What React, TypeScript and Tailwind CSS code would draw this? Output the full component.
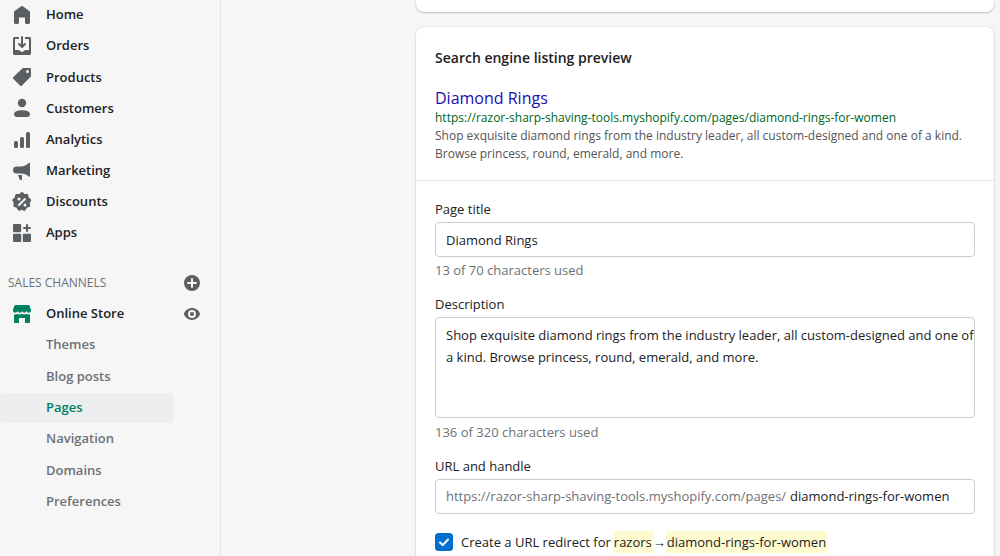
import React, { useState } from "react";
import clsx from "clsx";

type IconProps = { className?: string };

const Svg = ({
  children,
  className = "size-5",
}: IconProps & { children: React.ReactNode }) => (
  <svg
    viewBox="0 0 20 20"
    fill="currentColor"
    aria-hidden="true"
    className={clsx("shrink-0", className)}
  >
    {children}
  </svg>
);

const HomeIcon = () => (
  <Svg>
    <path d="M18 7.3V17.6c0 .8-.6 1.4-1.4 1.4h-2.2c-.8 0-1.4-.6-1.4-1.4V12.500H7v5.100c0 .8-.6 1.400-1.400 1.400H3.400C2.600 19 2 18.400 2 17.600V7.300c0-.5.2-.9.6-1.200l6.600-4.800c.5-.35 1.100-.35 1.600 0l6.600 4.800c.4.3.6.7.6 1.200z" />
  </Svg>
);

const OrdersIcon = () => (
  <Svg>
    <path d="M11 1a1 1 0 1 0-2 0v7.586L7.707 7.293a1 1 0 0 0-1.414 1.414l3 3a1 1 0 0 0 1.414 0l3-3a1 1 0 0 0-1.414-1.414L11 8.586V1z" />
    <path d="M3 14V3h4V1H2.500A1.500 1.500 0 0 0 1 2.500v15A1.500 1.500 0 0 0 2.500 19h15a1.500 1.500 0 0 0 1.500-1.500v-15A1.500 1.500 0 0 0 17.500 1H13v2h4v11h-3.500c-.775 0-1.388.662-1.926 1.244l-.11.12A1.994 1.994 0 0 1 10 16a1.994 1.994 0 0 1-1.463-.637l-.111-.12C7.888 14.664 7.275 14 6.500 14H3z" />
  </Svg>
);

const ProductsIcon = () => (
  <Svg>
    <path
      fillRule="evenodd"
      d="M10.300 1.400A1.400 1.400 0 0 1 11.300 1H17.600A1.400 1.400 0 0 1 19 2.400V8.700a1.400 1.400 0 0 1-.4 1l-8.600 8.900a1.400 1.400 0 0 1-2 0L1.400 12a1.400 1.400 0 0 1 0-2zM15.500 6a1.500 1.500 0 1 0 0-3 1.500 1.500 0 0 0 0 3z"
    />
  </Svg>
);

const CustomersIcon = () => (
  <Svg>
    <circle cx="10" cy="5" r="4.200" />
    <path d="M2 16c0-2.400 3.600-3.800 8-3.800s8 1.400 8 3.800c0 2-1.200 3-3 3H5c-1.800 0-3-1-3-3z" />
  </Svg>
);

const AnalyticsIcon = () => (
  <Svg>
    <rect x="2" y="11" width="4" height="7" rx="1.500" />
    <rect x="8" y="7" width="4" height="11" rx="1.500" />
    <rect x="14" y="2" width="4" height="16" rx="1.500" />
  </Svg>
);

const MarketingIcon = () => (
  <Svg>
    <path d="M18 2.200v13.100c0 .5-.5.700-.9.400-2.500-2.100-5.100-3.200-8.100-3.200H4.500A3.500 3.500 0 0 1 1 9a3.500 3.500 0 0 1 3.500-3.500H9c3 0 5.600-1.300 8.100-3.700.4-.3.9-.1.9.4z" />
    <path d="M6 14h4v4.200c0 .5-.4.800-.9.800H8.500c-.4 0-.7-.2-.8-.6z" />
  </Svg>
);

const DiscountsIcon = () => (
  <Svg>
    <path
      fillRule="evenodd"
      d="M11.600.9a2.200 2.200 0 0 0-3.200 0l-.8.800a1.200 1.200 0 0 1-1 .3l-1.100-.1a2.200 2.200 0 0 0-2.500 2.000l-.1 1.100a1.200 1.200 0 0 1-.6.900l-.900.600a2.200 2.200 0 0 0-.5 3.100l.6.900c.2.300.3.700.2 1l-.3 1.100a2.200 2.200 0 0 0 1.600 2.700l1.100.3c.3.100.6.300.8.700l.4 1a2.200 2.200 0 0 0 2.900 1.100l1-.5c.4-.2.700-.2 1.100 0l1 .5a2.200 2.200 0 0 0 2.900-1.100l.4-1c.2-.4.5-.6.8-.7l1.100-.3a2.200 2.200 0 0 0 1.600-2.700l-.3-1.100c-.1-.3 0-.7.2-1l.6-.9a2.200 2.200 0 0 0-.5-3.100l-.9-.6a1.200 1.200 0 0 1-.6-.9l-.1-1.100a2.200 2.200 0 0 0-2.500-2l-1.100.1a1.200 1.200 0 0 1-1-.3zM7 8.500a1.500 1.500 0 1 0 0-3 1.500 1.500 0 0 0 0 3zm6 6a1.500 1.500 0 1 0 0-3 1.500 1.500 0 0 0 0 3zm.7-6.800a1 1 0 0 0-1.400-1.400l-6 6a1 1 0 1 0 1.400 1.400z"
    />
  </Svg>
);

const AppsIcon = () => (
  <Svg>
    <rect x="1" y="1" width="8.200" height="8.200" rx="1" />
    <rect x="1" y="10.800" width="8.200" height="8.200" rx="1" />
    <rect x="10.800" y="10.800" width="8.200" height="8.200" rx="1" />
    <path d="M14 2a1 1 0 1 1 2 0v2h2a1 1 0 1 1 0 2h-2v2a1 1 0 1 1-2 0V6h-2a1 1 0 1 1 0-2h2z" />
  </Svg>
);

const StoreIcon = () => (
  <Svg>
    <path d="M3.500 1h13a1 1 0 0 1 .9.6L19 5.500V7a2.300 2.300 0 0 1-4.500 0 2.300 2.300 0 0 1-4.500 0 2.300 2.300 0 0 1-4.500 0A2.300 2.300 0 0 1 1 7V5.500l1.600-3.900a1 1 0 0 1 .9-.6z" />
    <path d="M2 10.300c1.300.5 2.700.2 3.600-.6 1.200 1 3.100 1 4.400 0 1.300 1 3.200 1 4.400 0 .9.800 2.300 1.100 3.600.6V18a1 1 0 0 1-1 1h-4v-5H7v5H3a1 1 0 0 1-1-1z" />
  </Svg>
);

const PlusIcon = () => (
  <Svg>
    <path
      fillRule="evenodd"
      d="M10 18a8 8 0 1 0 0-16 8 8 0 0 0 0 16zM11 6a1 1 0 1 0-2 0V9H6a1 1 0 1 0 0 2H9v3a1 1 0 1 0 2 0V11h3a1 1 0 1 0 0-2H11z"
    />
  </Svg>
);

const ViewIcon = () => (
  <Svg>
    <path
      fillRule="evenodd"
      d="M17.900 9.400C16.800 6.300 13.600 4 10 4S3.200 6.300 2.100 9.400a1.800 1.800 0 0 0 0 1.200C3.200 13.700 6.400 16 10 16s6.800-2.300 7.900-5.400a1.800 1.800 0 0 0 0-1.200zM10 14a4 4 0 1 0 0-8 4 4 0 0 0 0 8zm0-2a2 2 0 1 0 0-4 2 2 0 0 0 0 4z"
    />
  </Svg>
);

const mainNav = [
  { label: "Home", icon: HomeIcon },
  { label: "Orders", icon: OrdersIcon },
  { label: "Products", icon: ProductsIcon },
  { label: "Customers", icon: CustomersIcon },
  { label: "Analytics", icon: AnalyticsIcon },
  { label: "Marketing", icon: MarketingIcon },
  { label: "Discounts", icon: DiscountsIcon },
  { label: "Apps", icon: AppsIcon },
];

const storeNav = [
  "Themes",
  "Blog posts",
  "Pages",
  "Navigation",
  "Domains",
  "Preferences",
];

const Sidebar = () => (
  <nav
    aria-label="Main"
    className="w-[221px] shrink-0 border-r border-[#e1e3e5] pr-[46px] font-semibold"
  >
    <ul className="flex h-[248px] flex-col justify-between">
      {mainNav.map(({ label, icon: Icon }) => (
        <li key={label}>
          <a href="#" className="flex h-[30px] items-center gap-[14px] pl-3">
            <span className="text-[#5c5f62]">
              <Icon />
            </span>
            {label}
          </a>
        </li>
      ))}
    </ul>

    <div className="-mr-[28px] mt-5 flex h-[30px] items-center justify-between pl-2">
      <h2 className="text-xs font-normal text-[#6d7175]">SALES CHANNELS</h2>
      <button type="button" aria-label="Add channel" className="text-[#5c5f62]">
        <PlusIcon />
      </button>
    </div>

    <div className="-mr-[28px] mt-px flex h-[30px] items-center justify-between">
      <a href="#" className="flex items-center gap-[14px] pl-3">
        <span className="text-[#008060]">
          <StoreIcon />
        </span>
        Online Store
      </a>
      <button type="button" aria-label="View store" className="text-[#5c5f62]">
        <ViewIcon />
      </button>
    </div>

    <ul className="mt-px flex h-[187px] flex-col justify-between">
      {storeNav.map((label) => {
        const active = label === "Pages";
        return (
          <li key={label}>
            <a
              href="#"
              aria-current={active ? "page" : undefined}
              className={clsx(
                "flex h-[30px] items-center rounded pl-[46px]",
                active ? "bg-[#edeeef] text-[#008060]" : "text-[#6d7175]"
              )}
            >
              {label}
            </a>
          </li>
        );
      })}
    </ul>
  </nav>
);

const fieldClass =
  "w-full rounded border border-[#c9cccf] bg-white pl-[10px] outline-none focus:border-[#458fff]";

const SearchPreview = () => (
  <section className="border-b border-[#e1e3e5] px-[19px] pb-[17px] pt-5">
    <h2 className="text-sm leading-[22px] font-semibold">
      Search engine listing preview
    </h2>
    <div className="mt-[18px]">
      <a href="#" className="block text-base leading-[22px] text-[#1a0dab]">
        Diamond Rings
      </a>
      <p className="text-xs leading-[18px] text-[#006621]">
        https://razor-sharp-shaving-tools.myshopify.com/pages/diamond-rings-for-women
      </p>
      <p className="text-xs leading-[18px] text-[#545454]">
        Shop exquisite diamond rings from the industry leader, all
        custom-designed and one of a kind. Browse princess, round, emerald, and
        more.
      </p>
    </div>
  </section>
);

const SeoForm = () => {
  const [title, setTitle] = useState("Diamond Rings");
  const [description, setDescription] = useState(
    "Shop exquisite diamond rings from the industry leader, all custom-designed and one of a kind. Browse princess, round, emerald, and more."
  );
  const [handle, setHandle] = useState("diamond-rings-for-women");
  const [redirect, setRedirect] = useState(true);

  return (
    <form className="px-[19px] pb-5 pt-[18px]">
      <label htmlFor="title" className="block leading-5">
        Page title
      </label>
      <input
        id="title"
        type="text"
        value={title}
        onChange={(e) => setTitle(e.target.value)}
        className={clsx(fieldClass, "mt-[3px] block h-[35px]")}
      />
      <p className="mt-[3px] leading-5 text-[#6d7175]">
        {title.length} of 70 characters used
      </p>

      <label htmlFor="description" className="mt-[14px] block leading-5">
        Description
      </label>
      <textarea
        id="description"
        value={description}
        onChange={(e) => setDescription(e.target.value)}
        className={clsx(
          fieldClass,
          "mt-[3px] block h-[101px] resize-none py-[6px] leading-[22px]"
        )}
      />
      <p className="mt-1 leading-5 text-[#6d7175]">
        {description.length} of 320 characters used
      </p>

      <label htmlFor="handle" className="mt-[14px] block leading-5">
        URL and handle
      </label>
      <div
        className={clsx(fieldClass, "mt-[3px] flex h-[35px] items-center gap-1")}
      >
        <span className="shrink-0 text-[#6d7175]">
          https://razor-sharp-shaving-tools.myshopify.com/pages/
        </span>
        <input
          id="handle"
          type="text"
          value={handle}
          onChange={(e) => setHandle(e.target.value)}
          className="min-w-0 flex-1 outline-none"
        />
      </div>

      <div className="mt-[17px] flex items-center gap-2">
        <span className="grid size-[18px] shrink-0">
          <input
            id="redirect"
            type="checkbox"
            checked={redirect}
            onChange={(e) => setRedirect(e.target.checked)}
            className="peer col-start-1 row-start-1 size-[18px] appearance-none rounded-[3px] border border-[#8c9196] bg-white checked:border-[#006fcf] checked:bg-[#006fcf]"
          />
          <svg
            viewBox="0 0 18 18"
            fill="none"
            stroke="white"
            strokeWidth="2"
            strokeLinecap="round"
            strokeLinejoin="round"
            aria-hidden="true"
            className="pointer-events-none invisible col-start-1 row-start-1 peer-checked:visible"
          >
            <path d="M5 9.500l2.700 2.600L13 6.500" />
          </svg>
        </span>
        <label htmlFor="redirect" className="flex items-center leading-[22px]">
          Create a URL redirect for
          <mark className="ml-[2px] bg-[#fffbd1] px-px text-inherit">razors</mark>
          <span>→</span>
          <mark className="bg-[#fffbd1] px-px text-inherit">{handle}</mark>
        </label>
      </div>
    </form>
  );
};

const App = () => (
  <div className="flex h-screen overflow-hidden bg-[#f6f6f7] font-['Open_Sans','Noto_Sans',sans-serif] text-[13px] text-[#202223]">
    <Sidebar />
    <main className="min-w-0 flex-1 pl-[195px] pr-[6px]">
      <div className="h-3 rounded-b-lg bg-white shadow-[0_0_3px_rgba(23,24,24,0.08),0_1px_2px_rgba(0,0,0,0.2)]" />
      <div className="mt-[15px] rounded-lg bg-white shadow-[0_0_3px_rgba(23,24,24,0.08),0_1px_2px_rgba(0,0,0,0.2)]">
        <SearchPreview />
        <SeoForm />
      </div>
    </main>
  </div>
);

export default App;
